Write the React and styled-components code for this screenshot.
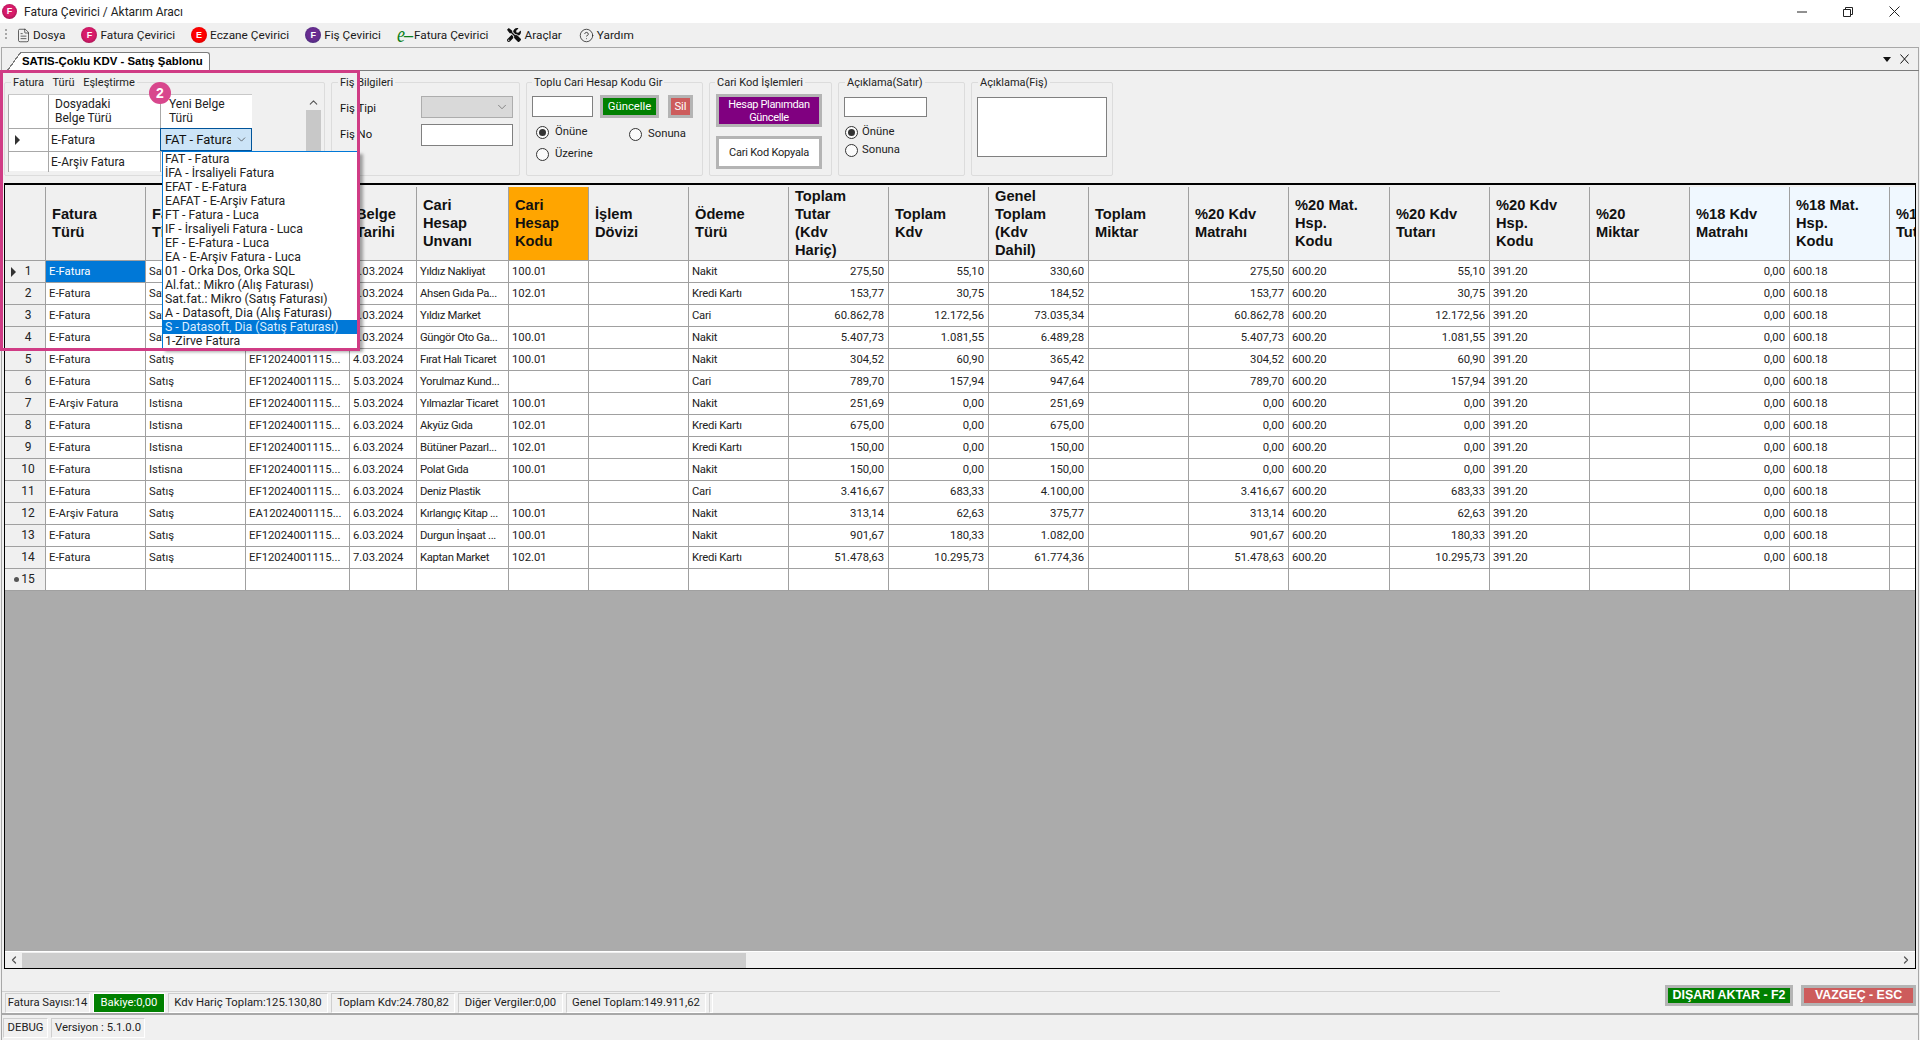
import React from 'react';
import styled, { createGlobalStyle } from 'styled-components';
import { FileText, CircleHelp, ChevronDown, ChevronUp, ChevronLeft, ChevronRight } from 'lucide-react';
import { FaTools } from 'react-icons/fa';

const Global = createGlobalStyle`
  html, body { margin: 0; padding: 0; overflow: hidden; background: #f0f0f0; }
  * { box-sizing: border-box; }
`;
const UI = `Roboto, "Liberation Sans", Arial, sans-serif`;
const BOLD = `"Liberation Sans", Arial, sans-serif`;
const TEMPLATE = '41px 100px 100px 104px 67px 92px 80px 100px 100px 100px 100px 100px 100px 100px 101px 100px 100px 100px 100px 100px 100px';

const Page = styled.div`
  position: relative; width: 1920px; height: 1040px; overflow: hidden;
  background: #f0f0f0; color: #111; font: 11.3px/14px ${UI};
  display: flex; flex-direction: column;
`;
const TitleBar = styled.div`
  height: 23px; flex: none; background: #fff; display: flex; align-items: center; padding-left: 2px;
  font-size: 12px; color: #222;
`;
const TitleText = styled.span`margin-left: 7px;`;
const WinControls = styled.div`margin-left: auto; display: flex; gap: 36px; padding-right: 20px; align-items: center;`;
const Badge = styled.span`
  width: ${p => p.$size || 16}px; height: ${p => p.$size || 16}px; border-radius: 50%; flex: none;
  display: inline-flex; align-items: center; justify-content: center;
  background: radial-gradient(circle at 50% 45%, ${p => p.$c1} 0 45%, ${p => p.$c2} 100%);
  color: #fff; font: bold 9px/1 ${BOLD};
`;
const Toolbar = styled.div`
  height: 24px; flex: none; display: flex; align-items: center; gap: 16px; padding-left: 16px;
  position: relative; font-size: 11.8px; color: #1a1a1a;
`;
const Grip = styled.span`
  position: absolute; left: 5px; top: 6px; width: 2px; height: 12px;
  background: repeating-linear-gradient(to bottom, #a8a8a8 0 2px, transparent 2px 4px);
`;
const ToolItem = styled.span`
  display: inline-flex; align-items: center; gap: ${p => p.$gap ?? 3}px; white-space: nowrap; margin-left: ${p => p.$ml || 0}px;
`;
const GreenE = styled.span`
  font: italic 18px/16px "Liberation Serif", serif; color: #0a7f1a; width: 17px; display: inline-block; white-space: nowrap;
  letter-spacing: -1px; transform: scaleY(1.25); transform-origin: 50% 60%;
`;
const Main = styled.div`
  flex: 1; margin: 0 1px; display: flex; flex-direction: column; min-height: 0;
  border-left: 1px solid #a8a8a8; border-right: 1px solid #a8a8a8;
`;
const TabStrip = styled.div`
  height: 24px; flex: none; display: flex; align-items: flex-end; padding-left: 20px; padding-right: 10px;
  border-top: 1px solid #a8a8a8; border-bottom: 1px solid #7c7c7c; margin: 0 -1px;
`;
const Tab = styled.div`
  position: relative; height: 19px; margin-bottom: -1px; width: 189px; background: #fff; padding-left: 1px;
  border: 1px solid #7c7c7c; border-left: 0; border-bottom: 0; border-top-right-radius: 3px;
  font: bold 11.4px/17px ${BOLD}; color: #000; white-space: nowrap;
  &::before {
    content: ''; position: absolute; left: -14px; top: -1px; bottom: 0; width: 14px;
    background: linear-gradient(to bottom right, transparent calc(50% - 0.6px), #7c7c7c calc(50% - 0.6px), #7c7c7c calc(50% + 0.6px), #fff calc(50% + 0.6px));
  }
`;
const TabTools = styled.div`margin-left: auto; display: flex; align-items: center; gap: 9px; height: 22px;`;
const Tri = styled.span`width: 0; height: 0; border: 4px solid transparent; border-top: 5px solid #111; border-bottom: 0;`;

const TopPanel = styled.div`
  height: 112px; flex: none; display: flex; gap: 6px; padding: 5px 0 0 2px; align-items: flex-start;
`;
const Group = styled.fieldset`
  margin: 0; padding: 0; width: ${p => p.$w}px; height: 100px; min-width: 0;
  border: 1px solid #dcdcdc; border-radius: 2px;
`;
const Legend = styled.legend`
  margin-left: ${p => p.$ml ?? 5}px; padding: 0 2px; font: 11px/13px ${UI}; color: #222; white-space: nowrap; word-spacing: ${p => p.$ws || 0}px;
`;
const MatchLayout = styled.div`display: flex; padding: 5px 0 0 3px; height: 81px;`;
const MiniGrid = styled.div`width: 244px; border-top: 1px solid #c8c8c8; background: #fff; align-self: flex-start; height: 77px;`;
const MiniRow = styled.div`
  display: grid; grid-template-columns: 40px 112px 92px; height: ${p => p.$h}px;
  border-bottom: ${p => p.$noLine ? '0' : '1px solid #a8a8a8'};
`;
const MiniCell = styled.div`
  position: relative; border-left: 1px solid #a8a8a8; padding: 0 0 ${p => p.$pb || 0}px ${p => p.$pl || 2}px;
  display: flex; align-items: center; white-space: pre-line; overflow: hidden; font-size: 12px; color: #222;
`;
const Combo = styled.div`
  background: #cce4f7; border: 1px solid #00549a; padding-left: 4px; display: flex; align-items: center;
  font-size: 13px; overflow: hidden; white-space: nowrap; margin: -1px 0 0 0;
`;
const ComboText = styled.span`width: 66px; overflow: hidden; flex: none;`;
const ComboChevron = styled.span`margin-left: 4px; display: inline-flex;`;
const RowArrow = styled.span`
  position: absolute; left: ${p => p.$l}px; top: 50%; margin-top: -5px; width: 0; height: 0;
  border: 5px solid transparent; border-left: 5px solid ${p => p.$c || '#333'}; border-right: 0;
`;
const VScroll = styled.div`
  margin-left: 54px; width: 15px; height: 77px; background: #f0f0f0; display: flex; flex-direction: column; align-items: center; flex: none;
`;
const VThumb = styled.div`width: 15px; flex: 1; background: #c8c8c8;`;
const VArrow = styled.div`height: 16px; display: flex; align-items: center; justify-content: center;`;

const FisLayout = styled.div`
  display: grid; grid-template-columns: 81px 92px; grid-auto-rows: 22px; row-gap: 6px; padding: 7px 0 0 8px; align-items: center;
`;
const FisLabel = styled.span`padding-top: ${p => p.$pt || 0}px;`;
const Field = styled.input`
  display: block; width: ${p => p.$w}px; height: ${p => p.$h}px; background: #fff; border: 1px solid #808080;
  padding: 0; margin: 0; border-radius: 0; outline: none;
`;
const FieldArea = styled.textarea`
  display: block; width: ${p => p.$w}px; height: ${p => p.$h}px; background: #fff; border: 1px solid #808080;
  padding: 0; margin: 0; border-radius: 0; resize: none; outline: none;
`;
const DisabledCombo = styled.div`
  height: 22px; background: #d9d9d9; border: 1px solid #adadad; display: flex; align-items: center; justify-content: flex-end; padding-right: 3px;
`;
const TopluLayout = styled.div`padding: 6px 0 0 5px;`;
const TopluRow = styled.div`display: flex; align-items: center; gap: 7px;`;
const FlatBtn = styled.button`
  display: flex; align-items: center; justify-content: center; text-align: center;
  width: ${p => p.$w}px; height: ${p => p.$h}px; margin: 0 0 0 ${p => p.$ml || 0}px; padding: 0;
  border: 3px solid #b4b4b4; background: ${p => p.$bg}; color: ${p => p.$fg || '#fff'};
  font: ${p => p.$bold ? 'bold' : 'normal'} ${p => p.$fs || 11.3}px/13px ${p => p.$bold ? BOLD : UI}; border-radius: 0;
  letter-spacing: ${p => p.$ls || 0}px;
`;
const RadioGrid = styled.div`
  display: grid; grid-template-columns: 93px auto; grid-auto-rows: 22px; margin: 3px 0 0 4px; align-items: center;
`;
const RadioLabel = styled.label`
  display: inline-flex; align-items: center; gap: ${p => p.$gap ?? 6}px; margin-top: ${p => p.$mt || 0}px; white-space: nowrap; color: #222;
`;
const RadioDot = styled.span`
  width: 13px; height: 13px; border-radius: 50%; border: 1px solid #333; background: #fbfbfb; flex: none;
  display: flex; align-items: center; justify-content: center;
  &::after { content: ''; width: 7px; height: 7px; border-radius: 50%; background: ${p => p.$on ? '#333' : 'transparent'}; }
`;
const KodLayout = styled.div`display: flex; flex-direction: column; gap: 9px; padding: 5px 0 0 6px;`;
const AcikLayout = styled.div`padding: 8px 0 0 5px;`;
const RadioStack = styled.div`display: flex; flex-direction: column; margin: 6px 0 0 1px;`;
const RadioRow = styled.div`height: 18px; display: flex; align-items: center;`;

const GridBox = styled.div`
  height: 786px; flex: none; margin: 0 2px; border: 1px solid #000; border-top: 2px solid #000; display: flex; flex-direction: column; overflow: hidden; background: #ababab;
`;
const HeadRow = styled.div`
  flex: none; display: grid; grid-template-columns: ${TEMPLATE}; height: 76px; padding-top: 2px; background: #f0f0f0;
  border-bottom: 1px solid #a0a0a0;
`;
const HeadCell = styled.div`
  background: ${p => p.$bg || '#f0f0f0'}; border-right: 1px solid #a0a0a0; padding: 0 0 2px 6px;
  display: flex; align-items: center; white-space: pre-line; font: bold 14.67px/18px ${BOLD}; color: #111; overflow: hidden;
`;
const DataRow = styled.div`
  flex: none; display: grid; grid-template-columns: ${TEMPLATE}; height: 22px; background: #fff; border-bottom: 1px solid #a0a0a0;
`;
const RowHead = styled.div`
  position: relative; background: #f0f0f0; border-right: 1px solid #a0a0a0; padding-left: 6px; text-align: center;
  font-size: 12px; line-height: 21px; color: #222;
`;
const NewDot = styled.span`position: absolute; left: 9px; top: 8px; width: 5px; height: 5px; border-radius: 50%; background: #555;`;
const Cell = styled.div`
  border-right: 1px solid #a0a0a0; padding: 0 ${p => p.$right ? 4 : 2}px 0 3px; text-align: ${p => p.$right ? 'right' : 'left'};
  background: ${p => p.$sel ? '#0078d7' : '#fff'}; color: ${p => p.$sel ? '#fff' : '#222'};
  line-height: 21px; white-space: nowrap; overflow: hidden; letter-spacing: ${p => p.$ls || 0}px;
`;
const GrayFill = styled.div`flex: 1; background: #ababab;`;
const HScroll = styled.div`
  flex: none; height: 17px; background: #f0f0f0; border-top: 1px solid #fff; display: flex; align-items: center; justify-content: space-between; position: relative; padding: 0 3px;
`;
const HThumb = styled.div`position: absolute; left: 17px; top: 1px; bottom: 0; width: 724px; background: #cdcdcd;`;

const Footer = styled.div`height: 46px; flex: none; display: flex; align-items: flex-start; border-bottom: 2px solid #a8a8a8;`;
const StatusStrip = styled.div`
  width: 1498px; margin-top: 22px; border-top: 1px solid #d0d0d0; height: 22px; display: flex; gap: 3px; padding: 1px 0 0 3px;
`;
const StatusItem = styled.div`
  width: ${p => p.$w}px; height: 20px; flex: none; line-height: 18px; white-space: nowrap; text-align: center; overflow: hidden;
  background: ${p => p.$bg || 'transparent'}; color: ${p => p.$fg || '#222'};
  border: 1px solid #fff; border-top-color: ${p => p.$bg ? '#fff' : '#cfcfcf'}; border-left-color: ${p => p.$bg ? '#fff' : '#cfcfcf'};
`;
const FooterBtns = styled.div`margin-left: auto; display: flex; gap: 8px; margin-top: 16px; margin-right: 2px;`;
const BottomStrip = styled.div`flex: 1; display: flex; gap: 3px; padding: 3px 0 0 1px;`;

const PinkFrame = styled.div`
  position: absolute; left: 0; top: 70px; width: 360px; height: 281px; border: 3px solid #d03c85; pointer-events: none; z-index: 3;
`;
const StepBadge = styled.span`
  position: absolute; left: 149px; top: 82px; width: 22px; height: 22px; border-radius: 50%; background: #d8478d; z-index: 4;
  color: #fff; font: bold 14px/22px ${BOLD}; text-align: center;
`;
const DropDown = styled.div`
  position: absolute; left: 162px; top: 151px; width: 198px; height: 198px; z-index: 2; background: #fff;
  border: 1px solid #0078d7; border-right: 0; box-shadow: 3px 3px 3px rgba(0,0,0,.35); font-size: 12.3px; line-height: 14px; color: #222; overflow: hidden;
`;
const DropItem = styled.div`
  height: 14px; padding-left: 2px; white-space: nowrap; background: ${p => p.$sel ? '#0078d7' : 'transparent'}; color: ${p => p.$sel ? '#ddeeff' : '#222'};
`;

const HEAD = [
  ['', ''], ['Fatura\nTürü'], ['Fatura\nTipi'], ['Belge\nNo'], ['Belge\nTarihi'], ['Cari\nHesap\nUnvanı'],
  ['Cari\nHesap\nKodu', '#ffa500'], ['İşlem\nDövizi'], ['Ödeme\nTürü'], ['Toplam\nTutar\n(Kdv\nHariç)'], ['Toplam\nKdv'],
  ['Genel\nToplam\n(Kdv\nDahil)'], ['Toplam\nMiktar'], ['%20 Kdv\nMatrahı'], ['%20 Mat.\nHsp.\nKodu'], ['%20 Kdv\nTutarı'],
  ['%20 Kdv\nHsp.\nKodu'], ['%20\nMiktar'], ['%18 Kdv\nMatrahı', '#f0f8ff'], ['%18 Mat.\nHsp.\nKodu', '#f0f8ff'], ['%18 Kdv\nTutarı', '#f0f8ff'],
];
const R = (tur, tip, no, tarih, unvan, kod, odeme, tutar, kdv, genel, mat, kt) => ({ tur, tip, no, tarih, unvan, kod, odeme, tutar, kdv, genel, mat, kt });
const EF = 'EF12024001115...';
const ROWS = [
  R('E-Fatura', 'Satış', EF, '4.03.2024', 'Yıldız Nakliyat', '100.01', 'Nakit', '275,50', '55,10', '330,60', '275,50', '55,10'),
  R('E-Fatura', 'Satış', EF, '4.03.2024', 'Ahsen Gıda Pa...', '102.01', 'Kredi Kartı', '153,77', '30,75', '184,52', '153,77', '30,75'),
  R('E-Fatura', 'Satış', EF, '4.03.2024', 'Yıldız Market', '', 'Cari', '60.862,78', '12.172,56', '73.035,34', '60.862,78', '12.172,56'),
  R('E-Fatura', 'Satış', EF, '4.03.2024', 'Güngör Oto Ga...', '100.01', 'Nakit', '5.407,73', '1.081,55', '6.489,28', '5.407,73', '1.081,55'),
  R('E-Fatura', 'Satış', EF, '4.03.2024', 'Fırat Halı Ticaret', '100.01', 'Nakit', '304,52', '60,90', '365,42', '304,52', '60,90'),
  R('E-Fatura', 'Satış', EF, '5.03.2024', 'Yorulmaz Kund...', '', 'Cari', '789,70', '157,94', '947,64', '789,70', '157,94'),
  R('E-Arşiv Fatura', 'Istisna', EF, '5.03.2024', 'Yılmazlar Ticaret', '100.01', 'Nakit', '251,69', '0,00', '251,69', '0,00', '0,00'),
  R('E-Fatura', 'Istisna', EF, '6.03.2024', 'Akyüz Gıda', '102.01', 'Kredi Kartı', '675,00', '0,00', '675,00', '0,00', '0,00'),
  R('E-Fatura', 'Istisna', EF, '6.03.2024', 'Bütüner Pazarl...', '102.01', 'Kredi Kartı', '150,00', '0,00', '150,00', '0,00', '0,00'),
  R('E-Fatura', 'Istisna', EF, '6.03.2024', 'Polat Gıda', '100.01', 'Nakit', '150,00', '0,00', '150,00', '0,00', '0,00'),
  R('E-Fatura', 'Satış', EF, '6.03.2024', 'Deniz Plastik', '', 'Cari', '3.416,67', '683,33', '4.100,00', '3.416,67', '683,33'),
  R('E-Arşiv Fatura', 'Satış', 'EA12024001115...', '6.03.2024', 'Kırlangıç Kitap ...', '100.01', 'Nakit', '313,14', '62,63', '375,77', '313,14', '62,63'),
  R('E-Fatura', 'Satış', EF, '6.03.2024', 'Durgun İnşaat ...', '100.01', 'Nakit', '901,67', '180,33', '1.082,00', '901,67', '180,33'),
  R('E-Fatura', 'Satış', EF, '7.03.2024', 'Kaptan Market', '102.01', 'Kredi Kartı', '51.478,63', '10.295,73', '61.774,36', '51.478,63', '10.295,73'),
];
const DROP = [
  'FAT - Fatura', 'İFA - İrsaliyeli Fatura', 'EFAT - E-Fatura', 'EAFAT - E-Arşiv Fatura', 'FT - Fatura - Luca', 'IF - İrsaliyeli Fatura - Luca',
  'EF - E-Fatura - Luca', 'EA - E-Arşiv Fatura - Luca', '01 - Orka Dos, Orka SQL', 'Al.fat.: Mikro (Alış Faturası)', 'Sat.fat.: Mikro (Satış Faturası)',
  'A - Datasoft, Dia (Alış Faturası)', 'S - Datasoft, Dia (Satış Faturası)', '1-Zirve Fatura',
];

const Radio = ({ label, on, mt, gap }) => (
  <RadioLabel $mt={mt} $gap={gap}><RadioDot $on={on} />{label}</RadioLabel>
);
const rowCells = (r) => [
  [r.tur], [r.tip], [r.no], [r.tarih], [r.unvan, 0, -0.35], [r.kod], [''], [r.odeme, 0, -0.25],
  [r.tutar, 1], [r.kdv, 1], [r.genel, 1], ['', 1], [r.mat, 1], ['600.20'], [r.kt, 1], ['391.20'], ['', 1], ['0,00', 1], ['600.18'], ['0,00', 1],
];

export default function App() {
  return (
    <Page>
      <Global />
      <TitleBar>
        <Badge $c1="#d81b6a" $c2="#7a1040" $size={15}>F</Badge>
        <TitleText>Fatura Çevirici / Aktarım Aracı</TitleText>
        <WinControls>
          <svg width="10" height="10" viewBox="0 0 10 10"><path d="M0 5h10" stroke="#222" strokeWidth="1" /></svg>
          <svg width="10" height="10" viewBox="0 0 10 10" fill="none" stroke="#222"><path d="M.5 2.5h7v7h-7zM2.5 2.5v-2h7v7h-2" /></svg>
          <svg width="11" height="11" viewBox="0 0 11 11" stroke="#222"><path d="M.5.5l10 10M10.5.5l-10 10" /></svg>
        </WinControls>
      </TitleBar>
      <Toolbar>
        <Grip />
        <ToolItem $gap={2}><FileText size={15} strokeWidth={1.1} color="#222" />Dosya</ToolItem>
        <ToolItem><Badge $c1="#d81b6a" $c2="#8d1248">F</Badge>Fatura Çevirici</ToolItem>
        <ToolItem><Badge $c1="#f00" $c2="#c30000">E</Badge>Eczane Çevirici</ToolItem>
        <ToolItem><Badge $c1="#6a2c91" $c2="#35306f">F</Badge>Fiş Çevirici</ToolItem>
        <ToolItem $gap={0}><GreenE>e–</GreenE>Fatura Çevirici</ToolItem>
        <ToolItem $gap={4} $ml={2}><FaTools size={14} color="#111" />Araçlar</ToolItem>
        <ToolItem $gap={3} $ml={1}><CircleHelp size={15} strokeWidth={1.25} color="#222" />Yardım</ToolItem>
      </Toolbar>
      <Main>
        <TabStrip>
          <Tab>SATIS-Çoklu KDV - Satış Şablonu</Tab>
          <TabTools>
            <Tri />
            <svg width="9" height="10" viewBox="0 0 9 10" stroke="#111"><path d="M.5.5l8 9M8.5.5l-8 9" /></svg>
          </TabTools>
        </TabStrip>
        <TopPanel>
          <Group $w={321}>
            <Legend $ml={6} $ws={6}>Fatura Türü Eşleştirme</Legend>
            <MatchLayout>
              <MiniGrid>
                <MiniRow $h={34}>
                  <MiniCell />
                  <MiniCell $pl={6} $pb={2}>{'Dosyadaki\nBelge Türü'}</MiniCell>
                  <MiniCell $pl={8} $pb={2}>{'Yeni Belge\nTürü'}</MiniCell>
                </MiniRow>
                <MiniRow $h={23}>
                  <MiniCell><RowArrow $l={6} /></MiniCell>
                  <MiniCell>E-Fatura</MiniCell>
                  <Combo>
                    <ComboText>FAT - Fatura</ComboText>
                    <ComboChevron><ChevronDown size={13} strokeWidth={1.25} color="#333" /></ComboChevron>
                  </Combo>
                </MiniRow>
                <MiniRow $h={20} $noLine>
                  <MiniCell />
                  <MiniCell>E-Arşiv Fatura</MiniCell>
                  <MiniCell />
                </MiniRow>
              </MiniGrid>
              <VScroll>
                <VArrow><ChevronUp size={13} strokeWidth={2} color="#555" /></VArrow>
                <VThumb />
              </VScroll>
            </MatchLayout>
          </Group>
          <Group $w={189}>
            <Legend $ml={6}>Fiş Bilgileri</Legend>
            <FisLayout>
              <FisLabel $pt={3}>Fiş Tipi</FisLabel>
              <DisabledCombo><ChevronDown size={14} strokeWidth={1.25} color="#666" /></DisabledCombo>
              <FisLabel>Fiş No</FisLabel>
              <Field $w={92} $h={22} />
            </FisLayout>
          </Group>
          <Group $w={177}>
            <Legend>Toplu Cari Hesap Kodu Gir</Legend>
            <TopluLayout>
              <TopluRow>
                <Field $w={61} $h={21} />
                <FlatBtn $w={59} $h={23} $bg="#008000">Güncelle</FlatBtn>
                <FlatBtn $w={25} $h={23} $bg="#cd5c5c" $ml={2}>Sil</FlatBtn>
              </TopluRow>
              <RadioGrid>
                <Radio label="Önüne" on />
                <Radio label="Sonuna" mt={4} />
                <Radio label="Üzerine" />
              </RadioGrid>
            </TopluLayout>
          </Group>
          <Group $w={123}>
            <Legend>Cari Kod İşlemleri</Legend>
            <KodLayout>
              <FlatBtn $w={106} $h={33} $bg="#800080" $fs={11} $ls={-0.35}>Hesap Planımdan<br />Güncelle</FlatBtn>
              <FlatBtn $w={106} $h={33} $bg="#fff" $fg="#222" $fs={11} $ls={-0.2}>Cari Kod Kopyala</FlatBtn>
            </KodLayout>
          </Group>
          <Group $w={127}>
            <Legend $ml={6}>Açıklama(Satır)</Legend>
            <AcikLayout>
              <Field $w={83} $h={20} />
              <RadioStack>
                <RadioRow><Radio label="Önüne" on gap={4} /></RadioRow>
                <RadioRow><Radio label="Sonuna" gap={4} /></RadioRow>
              </RadioStack>
            </AcikLayout>
          </Group>
          <Group $w={142}>
            <Legend $ml={6}>Açıklama(Fiş)</Legend>
            <AcikLayout><FieldArea $w={130} $h={60} /></AcikLayout>
          </Group>
        </TopPanel>
        <GridBox>
          <HeadRow>
            {HEAD.map(([t, bg], i) => <HeadCell key={i} $bg={bg}>{t}</HeadCell>)}
          </HeadRow>
          {ROWS.map((r, i) => (
            <DataRow key={i}>
              <RowHead>{i === 0 && <RowArrow $l={6} />}{i + 1}</RowHead>
              {rowCells(r).map(([v, right, ls], j) => (
                <Cell key={j} $right={!!right} $ls={ls} $sel={i === 0 && j === 0}>{v}</Cell>
              ))}
            </DataRow>
          ))}
          <DataRow>
            <RowHead><NewDot />15</RowHead>
            {rowCells({}).map((_, j) => <Cell key={j} />)}
          </DataRow>
          <GrayFill />
          <HScroll>
            <HThumb />
            <ChevronLeft size={12} strokeWidth={2.5} color="#555" />
            <ChevronRight size={12} strokeWidth={2.5} color="#555" />
          </HScroll>
        </GridBox>
        <Footer>
          <StatusStrip>
            <StatusItem $w={85}>Fatura Sayısı:14</StatusItem>
            <StatusItem $w={72} $bg="#008000" $fg="#fff">Bakiye:0,00</StatusItem>
            <StatusItem $w={160}>Kdv Hariç Toplam:125.130,80</StatusItem>
            <StatusItem $w={124}>Toplam Kdv:24.780,82</StatusItem>
            <StatusItem $w={105}>Diğer Vergiler:0,00</StatusItem>
            <StatusItem $w={140}>Genel Toplam:149.911,62</StatusItem>
            <StatusItem $w={4} />
          </StatusStrip>
          <FooterBtns>
            <FlatBtn $w={128} $h={21} $bg="#008000" $bold $fs={12.4}>DIŞARI AKTAR - F2</FlatBtn>
            <FlatBtn $w={115} $h={21} $bg="#cd5c5c" $bold $fs={12.4}>VAZGEÇ - ESC</FlatBtn>
          </FooterBtns>
        </Footer>
        <BottomStrip>
          <StatusItem $w={45}>DEBUG</StatusItem>
          <StatusItem $w={94}>Versiyon : 5.1.0.0</StatusItem>
        </BottomStrip>
      </Main>
      <DropDown>
        {DROP.map((d, i) => <DropItem key={d} $sel={i === 12}>{d}</DropItem>)}
      </DropDown>
      <PinkFrame />
      <StepBadge>2</StepBadge>
    </Page>
  );
}
